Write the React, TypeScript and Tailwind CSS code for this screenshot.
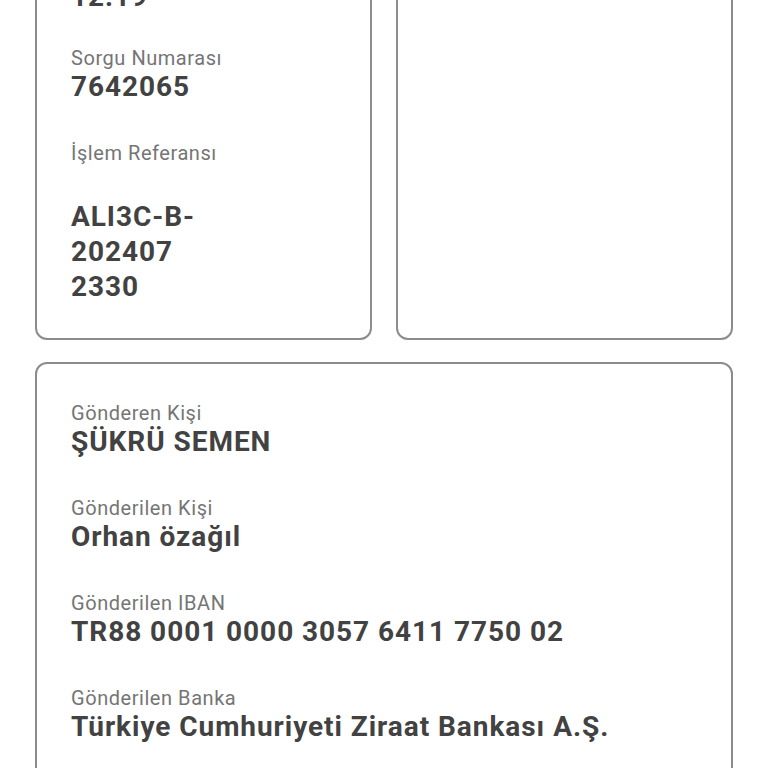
import React from "react";

type Row = { label: string; value: React.ReactNode; className?: string };

function Field({ label, value, className = "" }: Row) {
  return (
    <div className={"flex flex-col " + className}>
      <span className="text-[20px] leading-[22px] tracking-[0.55px] text-[#757575]">{label}</span>
      <span className="text-[28px] leading-[35px] tracking-[0.95px] font-bold text-[#424242]">
        {value}
      </span>
    </div>
  );
}

function Card({ children, className = "" }: { children?: React.ReactNode; className?: string }) {
  return (
    <div
      className={
        "rounded-[12px] border-2 border-[#8c8c8c] bg-white px-[34px] flex flex-col gap-[38px] " +
        className
      }
    >
      {children}
    </div>
  );
}

export default function App() {
  const receiver: Row[] = [
    { label: "Gönderen Kişi", value: "ŞÜKRÜ SEMEN" },
    { label: "Gönderilen Kişi", value: "Orhan özağıl" },
    { label: "Gönderilen IBAN", value: "TR88 0001 0000 3057 6411 7750 02" },
    { label: "Gönderilen Banka", value: "Türkiye Cumhuriyeti Ziraat Bankası A.Ş." },
    { label: "Açıklama", value: "Ödeme" },
  ];

  return (
    <div
      className="h-screen overflow-hidden bg-white"
      style={{ fontFamily: "Roboto, 'Noto Sans', sans-serif" }}
    >
      <div className="-mt-[83px] px-[35px] flex flex-col gap-[22px]">
        <div className="grid grid-cols-2 gap-6">
          <Card className="pt-[38px] pb-[34px]">
            <Field label="İşlem Saati" value="12:19" className="-mb-[5px]" />
            <Field label="Sorgu Numarası" value="7642065" />
            <Field
              label="İşlem Referansı"
              value={
                <>
                  <br />
                  ALI3C-B-
                  <br />
                  202407
                  <br />
                  2330
                </>
              }
            />
          </Card>
          <Card />
        </div>
        <Card className="pt-[38px] pb-[36px]">
          {receiver.map((r) => (
            <Field key={r.label} label={r.label} value={r.value} />
          ))}
        </Card>
      </div>
    </div>
  );
}
